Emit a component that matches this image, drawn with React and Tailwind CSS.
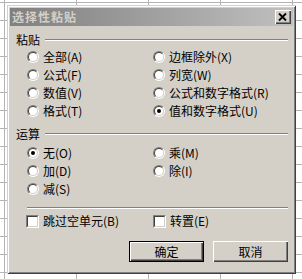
import React from "react";

const FONT = "font-['Noto_Sans_CJK_SC','Noto_Sans',sans-serif]";

function Radio({ checked }) {
  return (
    <span className="w-[12px] h-[12px] shrink-0 rounded-full border border-t-[#808080] border-l-[#808080] border-b-white border-r-white flex">
      <span className="flex-1 rounded-full border border-t-[#404040] border-l-[#404040] border-b-[#d4d0c8] border-r-[#d4d0c8] bg-white flex items-center justify-center">
        {checked && <span className="w-[4px] h-[4px] rounded-full bg-black" />}
      </span>
    </span>
  );
}

function Checkbox() {
  return (
    <span className="w-[13px] h-[13px] shrink-0 border border-t-[#808080] border-l-[#808080] border-b-white border-r-white flex">
      <span className="flex-1 border border-t-[#404040] border-l-[#404040] border-b-[#d4d0c8] border-r-[#d4d0c8] bg-white" />
    </span>
  );
}

function Option({ label, checked }) {
  return (
    <div className="h-[18px] flex items-center gap-[4px]">
      <Radio checked={checked} />
      <span className="text-[12px] leading-none text-black whitespace-nowrap">{label}</span>
    </div>
  );
}

function GroupHeader({ title }) {
  return (
    <div className="h-[16px] flex items-center pl-[9px] pr-[8px]">
      <span className="text-[12px] leading-none text-black">{title}</span>
      <div className="flex-1 ml-[5px] flex flex-col">
        <div className="h-px bg-[#808080]" />
        <div className="h-px bg-white" />
      </div>
    </div>
  );
}

function Button({ label, isDefault }) {
  if (isDefault) {
    return (
      <div className="w-[75px] h-[21px] border border-black flex">
        <div className="flex-1 bg-[#d4d0c8] shadow-[inset_1px_1px_#ffffff,inset_-1px_-1px_#404040,inset_-2px_-2px_#808080] flex items-center justify-center text-[12px] leading-none text-black">
          {label}
        </div>
      </div>
    );
  }
  return (
    <div className="w-[75px] h-[21px] bg-[#d4d0c8] shadow-[inset_1px_1px_#ffffff,inset_-1px_-1px_#404040,inset_-2px_-2px_#808080] flex items-center justify-center text-[12px] leading-none text-black">
      {label}
    </div>
  );
}

export default function App() {
  const paste = [
    ["全部(A)", false],
    ["边框除外(X)", false],
    ["公式(F)", false],
    ["列宽(W)", false],
    ["数值(V)", false],
    ["公式和数字格式(R)", false],
    ["格式(T)", false],
    ["值和数字格式(U)", true],
  ];
  const ops = [
    ["无(O)", true],
    ["乘(M)", false],
    ["加(D)", false],
    ["除(I)", false],
    ["减(S)", false],
  ];

  return (
    <div
      className={`w-[302px] h-[279px] overflow-hidden bg-white bg-[linear-gradient(to_right,#b4b4b4_1px,transparent_1px),linear-gradient(to_bottom,#b4b4b4_1px,transparent_1px)] bg-[size:72px_18px] bg-[position:4px_2px] pt-[5px] pl-[7px] ${FONT}`}
    >
      <div className="w-[289px] h-[269px] bg-[#d4d0c8] shadow-[inset_1px_1px_#d4d0c8,inset_-1px_-1px_#404040,inset_2px_2px_#ffffff,inset_-2px_-2px_#808080] p-[3px] flex flex-col">
        {/* title bar */}
        <div className="h-[18px] bg-gradient-to-r from-[#808080] to-[#c0c0c0] flex items-center justify-between pl-[2px] pr-[2px]">
          <span className="text-[12px] leading-none font-bold text-[#d4d0c8] tracking-[1px]">选择性粘贴</span>
          <div className="w-[16px] h-[14px] bg-[#d4d0c8] shadow-[inset_1px_1px_#ffffff,inset_-1px_-1px_#404040,inset_-2px_-2px_#808080] flex items-center justify-center">
            <svg width="16" height="14" viewBox="0 0 16 14">
              <path d="M4 3.5 L11 10.5 M11 3.5 L4 10.5" stroke="#000" strokeWidth="1.8" fill="none" />
            </svg>
          </div>
        </div>

        <div className="-mx-[3px] flex flex-col">
          <div className="mt-[6px]">
            <GroupHeader title="粘贴" />
          </div>
          <div className="grid grid-cols-[126px_1fr] pl-[20px]">
            {paste.map(([l, c]) => (
              <Option key={l} label={l} checked={c} />
            ))}
          </div>

          <div className="mt-[6px]">
            <GroupHeader title="运算" />
          </div>
          <div className="grid grid-cols-[126px_1fr] pl-[20px] mt-[2px]">
            {ops.map(([l, c]) => (
              <Option key={l} label={l} checked={c} />
            ))}
          </div>

          <div className="mt-[9px] ml-[20px] mr-[8px] flex flex-col">
            <div className="h-px bg-[#808080]" />
            <div className="h-px bg-white" />
          </div>

          <div className="mt-[3px] grid grid-cols-[127px_1fr] pl-[19px]">
            <div className="h-[18px] flex items-center gap-[4px]">
              <Checkbox />
              <span className="text-[12px] leading-none text-black">跳过空单元(B)</span>
            </div>
            <div className="h-[18px] flex items-center gap-[4px]">
              <Checkbox />
              <span className="text-[12px] leading-none text-black">转置(E)</span>
            </div>
          </div>

          <div className="mt-[11px] flex justify-end gap-[9px] pr-[8px]">
            <Button label="确定" isDefault />
            <Button label="取消" />
          </div>
        </div>
      </div>
    </div>
  );
}
